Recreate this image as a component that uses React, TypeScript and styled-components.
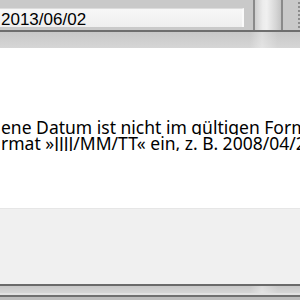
import React from "react";
import styled, { createGlobalStyle } from "styled-components";

const GlobalStyle = createGlobalStyle`
  html, body { margin: 0; padding: 0; background: #ffffff; }
  body { width: 300px; height: 300px; overflow: hidden; }
`;

const Frame = styled.div`
  width: 300px;
  height: 300px;
  display: flex;
  flex-direction: column;
  overflow: hidden;
`;

const TopBar = styled.div`
  height: 30px;
  display: flex;
  background: #c9c9c9;
  flex-shrink: 0;
`;

const DateField = styled.div`
  width: 241px;
  height: 16px;
  margin-top: 8px;
  padding: 2px 0 0 1px;
  border-top: 1px solid #dcdcdc;
  border-right: 2px solid #fafafa;
  background: linear-gradient(#f7f7f7, #eeeeee);
  font-family: "Liberation Sans", Arial, sans-serif;
  font-size: 17px;
  line-height: 18px;
  color: #000;
  white-space: nowrap;
`;

const Spacer = styled.div<{ $w: number }>`
  width: ${(p) => p.$w}px;
  flex-shrink: 0;
`;

const Splitter = styled.div`
  width: 26px;
  flex-shrink: 0;
  border-left: 2px solid #8a8a8a;
  border-right: 2px solid #8a8a8a;
  background: linear-gradient(90deg, #cfcfcf, #ececec 30%, #f0f0f0 45%, #d6d6d6 80%, #c4c4c4);
`;

const Grip = styled.div`
  width: 2px;
  margin-left: auto;
  background: repeating-linear-gradient(#c9c9c9 0 2px, #8c8c8c 2px 4px);
`;

const DarkLine = styled.div<{ $h: number; $c: string }>`
  height: ${(p) => p.$h}px;
  background: ${(p) => p.$c};
  flex-shrink: 0;
`;

const ShadeBand = styled.div<{ $h: number }>`
  height: ${(p) => p.$h}px;
  flex-shrink: 0;
  background:
    linear-gradient(90deg, rgba(255,255,255,0) 250px, rgba(255,255,255,0.35) 262px, rgba(255,255,255,0) 278px),
    linear-gradient(#c8c8c8, #d6d6d6);
`;

const MessagePanel = styled.div`
  height: 160px;
  flex-shrink: 0;
  background: #ffffff;
  padding-top: 71px;
  box-sizing: border-box;
  font-family: "Noto Sans", "Open Sans", sans-serif;
  font-size: 17.5px;
  line-height: 16px;
  color: #000;
`;

const MessageLine = styled.div`
  white-space: nowrap;
  overflow: hidden;
  padding-left: 1px;
`;

const ButtonArea = styled.div`
  height: 76px;
  flex-shrink: 0;
  background: #f0f0f0;
  border-top: 1px solid #e6e6e6;
  box-sizing: border-box;
`;

export default function App() {
  return (
    <>
      <GlobalStyle />
      <Frame>
        <TopBar>
          <DateField>2013/06/02</DateField>
          <Spacer $w={9} />
          <Splitter />
          <Grip />
        </TopBar>
        <DarkLine $h={2} $c="#6e6e6e" />
        <ShadeBand $h={16} />
        <MessagePanel>
          <MessageLine>ene Datum ist nicht im gültigen Format.</MessageLine>
          <MessageLine>rmat »JJJJ/MM/TT« ein, z. B. 2008/04/21.</MessageLine>
        </MessagePanel>
        <ButtonArea />
        <DarkLine $h={2} $c="#6a6a6a" />
        <ShadeBand $h={7} />
        <DarkLine $h={2} $c="#e2e2e2" />
        <DarkLine $h={2} $c="#707070" />
        <DarkLine $h={3} $c="#bdbdbd" />
      </Frame>
    </>
  );
}
